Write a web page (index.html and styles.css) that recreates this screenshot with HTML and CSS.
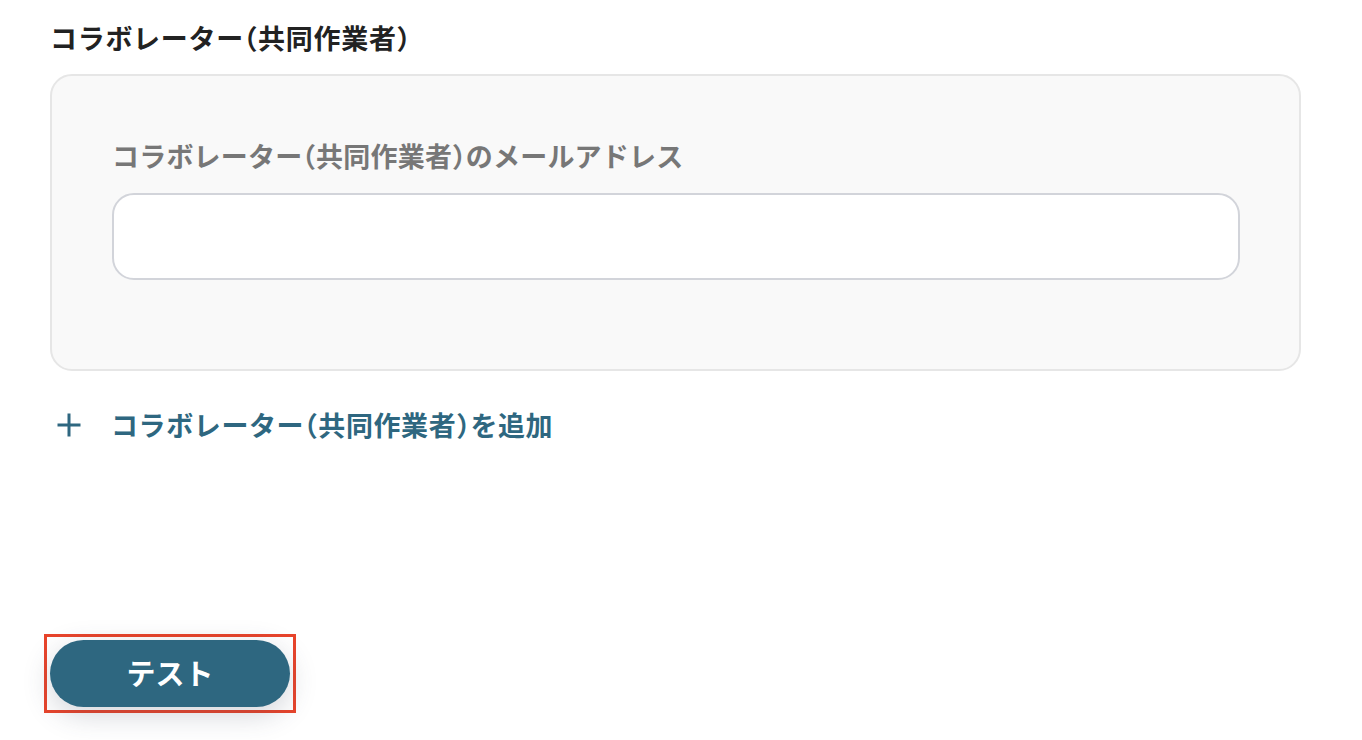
FILE: index.html
```html
<!DOCTYPE html>
<html lang="ja">
<head>
<meta charset="utf-8">
<link rel="stylesheet" href="styles.css">
</head>
<body>
<main class="page">
  <h2 class="heading">コラボレーター<span class="paren">（</span>共同作業者<span class="paren">）</span></h2>
  <section class="card">
    <label class="field-label" for="email">コラボレーター<span class="paren">（</span>共同作業者<span class="paren">）</span>のメールアドレス</label>
    <input class="field-input" id="email" type="text">
  </section>
  <div class="add-row">
    <svg class="plus" width="26" height="26" viewBox="0 0 26 26" aria-hidden="true"><path d="M13 1.5V24.5M1.5 13H24.5" stroke="#2e6780" stroke-width="3" fill="none"/></svg>
    <span class="add-text">コラボレーター<span class="paren">（</span>共同作業者<span class="paren">）</span>を追加</span>
  </div>
  <div class="spacer"></div>
  <div class="highlight">
    <button class="test-btn" type="button">テスト</button>
  </div>
</main>
</body>
</html>
```
FILE: styles.css
```css
html, body {
  margin: 0;
  padding: 0;
  background: #ffffff;
}
body {
  font-family: "Noto Sans CJK JP", "Noto Sans", sans-serif;
  width: 1362px;
  height: 740px;
  overflow: hidden;
}
.page {
  display: flex;
  flex-direction: column;
  align-items: flex-start;
  padding: 20px 61px 0 50px;
}
.paren {
  font-feature-settings: "halt";
}
.heading {
  margin: 0;
  font-size: 27px;
  line-height: 36px;
  font-weight: 600;
  letter-spacing: 0.7px;
  color: #222222;
}
.card {
  box-sizing: border-box;
  margin-top: 18px;
  width: 1251px;
  height: 297px;
  border: 2px solid #e6e6e6;
  border-radius: 22px;
  background: #f9f9f9;
  padding: 62px 60px 0 60px;
  display: flex;
  flex-direction: column;
}
.field-label {
  font-size: 27px;
  line-height: 36px;
  font-weight: 600;
  letter-spacing: 0.2px;
  color: #777777;
}
.field-input {
  box-sizing: border-box;
  margin-top: 19px;
  width: 1128px;
  height: 87px;
  border: 2px solid #d2d4da;
  border-radius: 22px;
  background: #ffffff;
  outline: none;
}
.add-row {
  display: flex;
  align-items: center;
  margin-top: 36px;
  margin-left: 6px;
  gap: 29px;
}
.add-text {
  font-size: 27px;
  line-height: 36px;
  font-weight: 600;
  letter-spacing: 0.6px;
  color: #2e6780;
}
.spacer {
  height: 191px;
}
.highlight {
  margin-left: -6px;
  border: 3px solid #e8442b;
  padding: 3px;
  display: flex;
}
.test-btn {
  width: 240px;
  height: 67px;
  border: none;
  border-radius: 34px;
  background: #2e6780;
  color: #ffffff;
  font-family: "Noto Sans CJK JP", "Noto Sans", sans-serif;
  font-size: 29px;
  font-weight: 600;
  padding-bottom: 4px;
  box-shadow: 0 8px 28px rgba(60, 70, 90, 0.22);
  cursor: pointer;
}
```
